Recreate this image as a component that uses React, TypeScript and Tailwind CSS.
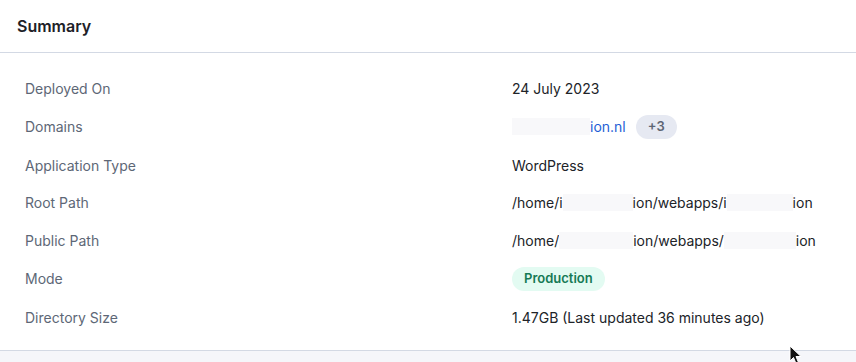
import React from "react";

const Redact = ({ w }: { w: number }) => (
  <span className="inline-block h-[17px] bg-[#f8f8fa] align-middle" style={{ width: w }} />
);

const rows: { label: string; value: React.ReactNode }[] = [
  { label: "Deployed On", value: <span>24 July 2023</span> },
  {
    label: "Domains",
    value: (
      <span className="flex items-center">
        <span className="inline-block w-[78px] h-[17px] bg-[#f8f8fa]" />
        <span className="text-[#1f5fd6]">ion.nl</span>
        <span className="ml-[10px] inline-flex h-6 items-center rounded-full bg-[#e6e9f2] px-[12px] text-[13px] font-semibold text-[#5d6573]">
          +3
        </span>
      </span>
    ),
  },
  { label: "Application Type", value: <span>WordPress</span> },
  {
    label: "Root Path",
    value: (
      <span className="flex items-center whitespace-nowrap">
        /home/i
        <Redact w={70} />
        ion/webapps/i
        <Redact w={66} />
        ion
      </span>
    ),
  },
  {
    label: "Public Path",
    value: (
      <span className="flex items-center whitespace-nowrap">
        /home/
        <Redact w={74} />
        ion/webapps/
        <Redact w={72} />
        ion
      </span>
    ),
  },
  {
    label: "Mode",
    value: (
      <span className="inline-flex h-6 items-center rounded-full bg-[#e3fbf2] px-[12px] text-[13px] font-semibold text-[#167a55]">
        Production
      </span>
    ),
  },
  { label: "Directory Size", value: <span>1.47GB (Last updated 36 minutes ago)</span> },
];

export default function App() {
  return (
    <div
      className="relative w-[856px] h-[362px] bg-white overflow-hidden text-[14px]"
      style={{ fontFamily: "Inter, 'Noto Sans', sans-serif" }}
    >
      <div className="h-[52px] flex items-center px-[17px] border-b border-[#d3d9e4] box-content">
        <h2 className="text-[16px] font-semibold text-[#1d2127]">Summary</h2>
      </div>
      <div className="flex flex-col gap-[15.6px] pt-[24px] pb-[21px] px-[25px] border-b border-[#d3d9e4]">
        {rows.map((r) => (
          <div key={r.label} className="flex items-center min-h-[22px]">
            <div className="w-[487px] text-[#5d6776]">{r.label}</div>
            <div className="text-[#202328]">{r.value}</div>
          </div>
        ))}
      </div>
      <div className="h-[20px] bg-[#f5f6fa]" />
      <svg
        className="absolute left-[789px] top-[345px]"
        width="14"
        height="20"
        viewBox="0 0 14 20"
      >
        <path d="M1 1 L1 16 L4.5 12.5 L7 18.5 L9.5 17.5 L7 11.5 L12 11.5 Z" fill="#111" stroke="#fff" strokeWidth="1" />
      </svg>
    </div>
  );
}
